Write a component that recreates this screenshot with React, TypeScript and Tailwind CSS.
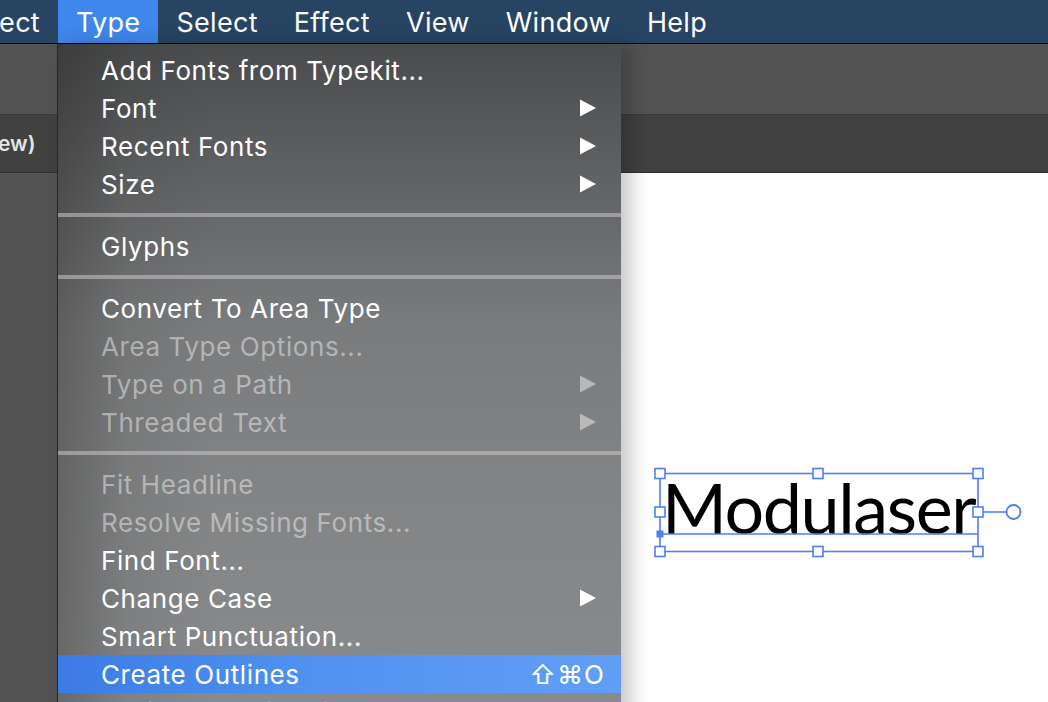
import React from 'react';

type Item =
  | { kind: 'item'; label: string; disabled?: boolean; sub?: boolean; shortcut?: string; active?: boolean }
  | { kind: 'sep' };

const items: Item[] = [
  { kind: 'item', label: 'Add Fonts from Typekit...' },
  { kind: 'item', label: 'Font', sub: true },
  { kind: 'item', label: 'Recent Fonts', sub: true },
  { kind: 'item', label: 'Size', sub: true },
  { kind: 'sep' },
  { kind: 'item', label: 'Glyphs' },
  { kind: 'sep' },
  { kind: 'item', label: 'Convert To Area Type' },
  { kind: 'item', label: 'Area Type Options...', disabled: true },
  { kind: 'item', label: 'Type on a Path', disabled: true, sub: true },
  { kind: 'item', label: 'Threaded Text', disabled: true, sub: true },
  { kind: 'sep' },
  { kind: 'item', label: 'Fit Headline', disabled: true },
  { kind: 'item', label: 'Resolve Missing Fonts...', disabled: true },
  { kind: 'item', label: 'Find Font...' },
  { kind: 'item', label: 'Change Case', sub: true },
  { kind: 'item', label: 'Smart Punctuation...' },
  { kind: 'item', label: 'Create Outlines', shortcut: '⇧⌘O', active: true },
  { kind: 'item', label: 'Optical Margin Alignment' },
];

const menus = ['Type', 'Select', 'Effect', 'View', 'Window', 'Help'];

function Arrow({ dim }: { dim?: boolean }) {
  return (
    <svg width="18" height="18" viewBox="0 0 18 18" className={dim ? 'opacity-45' : ''}>
      <path d="M1 0.5 L17 9 L1 17.5 Z" fill="#ffffff" />
    </svg>
  );
}

function Handle({ x, y }: { x: number; y: number }) {
  return <rect x={x - 5} y={y - 5} width="10" height="10" fill="#ffffff" stroke="#4f7ff0" strokeWidth="1.6" />;
}

export default function App() {
  return (
    <div
      className="relative w-[1048px] h-[702px] overflow-hidden bg-[#535353] flex flex-col"
      style={{ fontFamily: "Inter, 'DejaVu Sans', sans-serif" }}
    >
      {/* Menu bar */}
      <div className="h-[44px] shrink-0 bg-[#274463] border-b border-black flex items-center text-white text-[27px] tracking-[0.3px]">
        <span className="ml-[-20px] pr-[18px] w-[78px] text-right pt-[3px]">ect</span>
        {menus.map((m) => (
          <span
            key={m}
            className={`h-full flex items-center px-[18px] pt-[3px] ${m === 'Type' ? 'bg-[#3f87ec]' : ''}`}
          >
            {m}
          </span>
        ))}
      </div>

      {/* Control bar */}
      <div className="h-[71px] shrink-0 bg-[#535353] border-b border-[#3a3a3a]" />

      {/* Document tab row */}
      <div className="h-[58px] shrink-0 bg-[#414141] border-b border-[#2f2f2f] flex items-center">
        <span className="text-[#e4e4e4] text-[21px] font-semibold ml-[-2px]">ew)</span>
      </div>

      {/* Workspace */}
      <div className="flex-1 flex">
        <div className="w-[200px] bg-[#535353]" />
        <div className="flex-1 bg-white" />
      </div>

      {/* Selected text object on canvas */}
      <div className="absolute left-[640px] top-[450px] w-[400px] h-[120px]">
        <div
          className="absolute left-[22px] top-[11px] text-black text-[70px] leading-[92px] tracking-[-1.4px]"
          style={{ fontFamily: "Lato, sans-serif" }}
        >
          Modulaser
        </div>
        <svg className="absolute inset-0" width="400" height="120" viewBox="0 0 400 120">
          <rect x="20" y="23.5" width="318" height="78" fill="none" stroke="#4f7ff0" strokeWidth="1.6" />
          <line x1="20" y1="84" x2="338" y2="84" stroke="#4f7ff0" strokeWidth="1.6" />
          <line x1="338" y1="62" x2="366" y2="62" stroke="#4f7ff0" strokeWidth="1.6" />
          <circle cx="373.5" cy="62" r="7" fill="#ffffff" stroke="#4f7ff0" strokeWidth="1.8" />
          <Handle x={20} y={23.5} />
          <Handle x={178} y={23.5} />
          <Handle x={338} y={23.5} />
          <Handle x={20} y={62} />
          <Handle x={338} y={62} />
          <Handle x={20} y={101.5} />
          <Handle x={178} y={101.5} />
          <Handle x={338} y={101.5} />
          <rect x="16.5" y="80.5" width="7" height="7" fill="#4f7ff0" />
        </svg>
      </div>

      {/* Type dropdown menu */}
      <div className="absolute left-[57px] top-[44px] w-[564px] h-[700px] border-l border-[#262626] shadow-[10px_0_18px_rgba(0,0,0,0.22)] bg-[linear-gradient(180deg,#4a4b4c_0%,#5f6061_18%,#7a7b7c_40%,#838485_65%,#8a8b8c_100%)]">
        <div className="absolute inset-0 bg-[linear-gradient(90deg,rgba(20,20,20,0.28)_0%,rgba(20,20,20,0.08)_12%,rgba(0,0,0,0)_28%)]" />
        <div className="relative pt-[7px] flex flex-col">
          {items.map((it, i) =>
            it.kind === 'sep' ? (
              <div key={i} className="h-[24px] flex items-center">
                <div className="h-[4px] w-full bg-[rgba(200,201,202,0.55)]" />
              </div>
            ) : (
              <div
                key={i}
                className={`h-[38px] flex items-center justify-between pl-[43px] text-[26px] tracking-[0.6px] ${
                  it.shortcut ? 'pr-[16px]' : 'pr-[24px]'
                } ${it.active ? 'bg-[linear-gradient(90deg,#3a7ce4_0%,#5092f0_45%,#619ff6_100%)]' : ''} ${
                  it.disabled ? 'text-[rgba(255,255,255,0.45)]' : 'text-white'
                }`}
              >
                <span>{it.label}</span>
                {it.sub && <Arrow dim={it.disabled} />}
                {it.shortcut && <span className="tracking-[1px]">{it.shortcut}</span>}
              </div>
            )
          )}
        </div>
      </div>
    </div>
  );
}
